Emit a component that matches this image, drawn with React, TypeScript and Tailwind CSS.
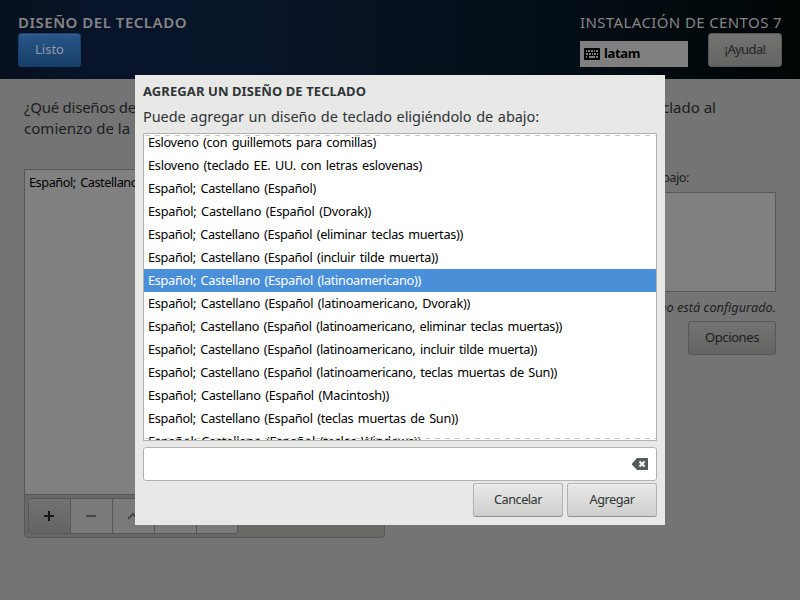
import React from "react";

const rows: [string, string][] = [
  ["Esloveno (con guillemots para comillas)", "w-[228px]"],
  ["Esloveno (teclado EE. UU. con letras eslovenas)", "w-[274px]"],
  ["Español; Castellano (Español)", "w-[168px]"],
  ["Español; Castellano (Español (Dvorak))", "w-[223px]"],
  ["Español; Castellano (Español (eliminar teclas muertas))", "w-[315px]"],
  ["Español; Castellano (Español (incluir tilde muerta))", "w-[290px]"],
  ["Español; Castellano (Español (latinoamericano))", "w-[273px]"],
  ["Español; Castellano (Español (latinoamericano, Dvorak))", "w-[322px]"],
  ["Español; Castellano (Español (latinoamericano, eliminar teclas muertas))", "w-[414px]"],
  ["Español; Castellano (Español (latinoamericano, incluir tilde muerta))", "w-[389px]"],
  ["Español; Castellano (Español (latinoamericano, teclas muertas de Sun))", "w-[409px]"],
  ["Español; Castellano (Español (Macintosh))", "w-[241px]"],
  ["Español; Castellano (Español (teclas muertas de Sun))", "w-[310px]"],
  ["Español; Castellano (Español (teclas Windows))", "w-[273px]"],
];

/** A single line of text whose tracking is adjusted to fill the width of its box. */
function Line({ text, className }: { text: string; className: string }) {
  const box = React.useRef<HTMLDivElement>(null);
  const inner = React.useRef<HTMLSpanElement>(null);
  const [tracking, setTracking] = React.useState(0);
  React.useLayoutEffect(() => {
    if (!box.current || !inner.current) return;
    const spare = box.current.offsetWidth - inner.current.getBoundingClientRect().width;
    setTracking(spare / text.length);
  }, [text]);
  return (
    <div ref={box} className={`shrink-0 whitespace-nowrap ${className}`}>
      <span ref={inner} style={{ letterSpacing: tracking }}>{text}</span>
    </div>
  );
}

function KeyboardIcon() {
  return (
    <svg width="16" height="12" viewBox="0 0 16 12">
      <rect width="16" height="12" rx="1" fill="#000" />
      <path
        d="M2 2h1v2H2zM4 2h2v2H4zM7 2h2v2H7zM10 2h1v2h-1zM12 2h2v2h-2zM2 5h2v2H2zM5 5h2v2H5zM8 5h1v2H8zM10 5h2v2h-2zM13 5h1v2h-1zM2 8h1v2H2zM5 8h6v2H5zM12 8h2v2h-2z"
        fill="#808080"
      />
    </svg>
  );
}

function ClearIcon() {
  return (
    <svg width="16" height="12" viewBox="0 0 16 12">
      <path d="M5 0H15.500a.5.5 0 0 1 .5.5v11a.5.5 0 0 1-.5.5H5L0 6.500v-1z" fill="#555c5c" />
      <path d="M7.500 3.500l5 5M12.500 3.500l-5 5" stroke="#fff" strokeWidth="2" />
    </svg>
  );
}

function Header() {
  return (
    <header className="flex h-[79px] justify-between bg-[linear-gradient(90deg,#07101d_0%,#08142a_12%,#081426_38%,#06111d_55%,#040d14_75%,#01090c_88%,#010506_100%)] px-[18px] pt-3">
      <div>
        <Line text="DISEÑO DEL TECLADO" className="h-[21px] w-[169px] text-[15px] font-semibold leading-[21px] text-[#858585]" />
        <button className="flex h-[34px] w-[63px] items-center justify-center rounded-[3px] border border-[#173f6d] bg-linear-to-b from-[#285689] to-[#183e69] text-[#929ba5] shadow-[inset_0_1px_#36618f]">
          <Line text="Listo" className="w-[29px]" />
        </button>
      </div>
      <div className="w-[202px]">
        <Line text="INSTALACIÓN DE CENTOS 7" className="h-[21px] w-[202px] text-[15px] leading-[21px] text-[#858585]" />
        <div className="flex justify-between">
          <div className="mt-2 flex h-[26px] w-[108px] items-center gap-[4px] bg-[#808080] pl-1 font-bold text-black">
            <KeyboardIcon />
            <Line text="latam" className="w-[36px]" />
          </div>
          <button className="flex h-[34px] w-[74px] items-center justify-center rounded-[3px] border border-[#575855] bg-linear-to-b from-[#727272] to-[#646462] text-[#202525]">
            <Line text="¡Ayuda!" className="w-[41px]" />
          </button>
        </div>
      </div>
    </header>
  );
}

function Toolbar() {
  return (
    <div className="flex h-[44px] w-[361px] rounded-b-[4px] border border-[#575855] bg-[#686965] p-[3px]">
      <div className="flex h-9 w-[210px] rounded-[3px] border border-[#575855] bg-[#7a7a7a]">
        <div className="flex w-[42px] items-center justify-center border-r border-[#575855] bg-linear-to-b from-[#727272] to-[#646462] pr-px">
          <svg width="10" height="10"><path d="M0 5h10M5 0v10" stroke="#111717" strokeWidth="2" /></svg>
        </div>
        <div className="flex w-[42px] items-center justify-center border-r border-[#575855] pr-px">
          <svg width="10" height="10"><path d="M0 5h10" stroke="#464949" strokeWidth="2" /></svg>
        </div>
        <div className="flex w-[42px] items-center justify-center border-r border-[#575855] pr-px">
          <svg width="12" height="8"><path d="M1 7l5-5 5 5" fill="none" stroke="#464949" strokeWidth="2" /></svg>
        </div>
        <div className="w-[42px] border-r border-[#575855]" />
      </div>
    </div>
  );
}

function Spoke() {
  return (
    <main className="h-[521px] bg-[#747474] px-6 pt-[18px] text-[#1a1e1e]">
      <div className="h-[72px] text-[15px] leading-[21px]">
        <div className="flex w-[692px] justify-between">
          <Line text="¿Qué diseños de" className="w-[112px]" />
          <Line text="clado al" className="w-[54px]" />
        </div>
        <Line text="comienzo de la l" className="w-[114px]" />
      </div>
      <div className="flex justify-between">
        <div className="w-[361px]">
          <div className="h-[325px] border border-b-0 border-[#575855] bg-[#808080] px-1 pt-px text-[12.7px] leading-[22px] text-black">
            <Line text="Español; Castellano" className="w-[109px] [word-spacing:1.5px]" />
          </div>
          <Toolbar />
        </div>
        <div className="flex w-[352px] flex-col items-end">
          <Line text="bajo:" className="mr-[87px] h-[23px] w-[27px] text-[12.7px] leading-[17px]" />
          <div className="h-[100px] w-[352px] border border-[#575855] bg-[#808080]" />
          <Line text="no está configurado." className="mt-[5px] h-[24px] w-[117px] text-[12.7px] italic leading-[20px]" />
          <button className="flex h-[34px] w-[88px] items-center justify-center rounded-[3px] border border-[#575855] bg-linear-to-b from-[#727272] to-[#646462]">
            <Line text="Opciones" className="w-[54px]" />
          </button>
        </div>
      </div>
    </main>
  );
}

function DialogButton({ label, width }: { label: string; width: string }) {
  return (
    <button className="flex h-[34px] w-[90px] items-center justify-center rounded-[3px] border border-[#b2b3af] border-b-[#929390] bg-linear-to-b from-[#e9e9e8] to-[#cfcfcd] text-[12.7px] text-[#2e3436] shadow-[inset_0_1px_#f0f0ef]">
      <Line text={label} className={width} />
    </button>
  );
}

function Dialog() {
  return (
    <div className="absolute left-[135px] top-[75px] h-[450px] w-[530px] bg-[#e8e8e6] px-2 pt-1.5 text-[#2e3436]">
      <Line text="AGREGAR UN DISEÑO DE TECLADO" className="h-[24px] w-[223px] font-bold leading-[21px]" />
      <Line text="Puede agregar un diseño de teclado eligiéndolo de abajo:" className="h-[28px] w-[396px] text-[14.5px] leading-[23px] [word-spacing:1px]" />
      <div className="relative h-[308px] overflow-hidden border border-[#b2b3af] bg-white text-black">
        <div className="-mt-[3px] text-[12.7px] [word-spacing:1.5px]">
          {rows.map(([text, width], i) => (
            <div key={text} className={`flex h-[23px] pl-1 leading-[23px] ${i === 6 ? "bg-[#4a90d9] text-white" : ""}`}>
              <Line text={text} className={width} />
            </div>
          ))}
        </div>
        <div className="absolute inset-x-0 top-px h-px bg-[repeating-linear-gradient(90deg,transparent_0px,transparent_1px,#c8c8c8_1px,#c8c8c8_6px,transparent_6px,transparent_10px)]" />
        <div className="absolute inset-x-0 bottom-px h-px bg-[repeating-linear-gradient(90deg,transparent_0px,transparent_1px,#c8c8c8_1px,#c8c8c8_6px,transparent_6px,transparent_10px)]" />
      </div>
      <div className="mt-1.5 flex h-[34px] items-center justify-end rounded-[3px] border border-[#b2b3af] bg-white pr-2">
        <ClearIcon />
      </div>
      <div className="mt-[2px] flex justify-end gap-1">
        <DialogButton label="Cancelar" width="w-[48px]" />
        <DialogButton label="Agregar" width="w-[45px]" />
      </div>
    </div>
  );
}

export default function App() {
  return (
    <div className="relative h-[600px] w-[800px] overflow-hidden font-['Noto_Sans',sans-serif] text-[13px]">
      <Header />
      <Spoke />
      <Dialog />
    </div>
  );
}
